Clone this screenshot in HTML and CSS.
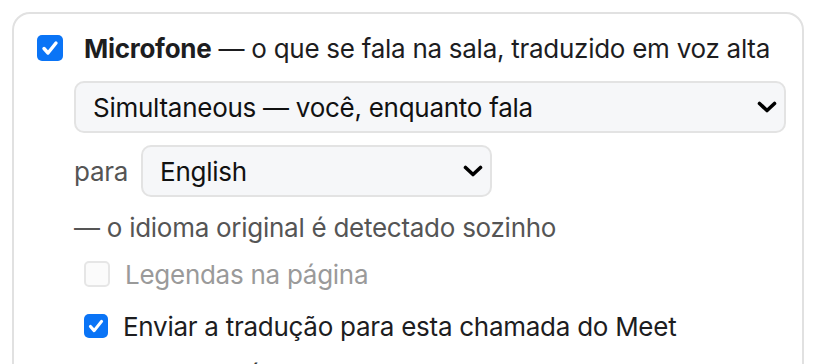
FILE: index.html
```html
<!doctype html>
<html>
<head>
<meta charset="utf-8">
<title>Tradução</title>
<link rel="stylesheet" href="styles.css">
</head>
<body>
<div class="card">
    <label class="mainRow">
        <span class="box on"><svg viewBox="0 0 26 26"><path d="M7 13.5l4 4.5 8-10" /></svg></span>
        <span class="mainTxt"><b>Microfone</b> — o que se fala na sala, traduzido em voz alta</span>
    </label>
    <div class="sub">
        <div class="fakeSelect wide">
            <span>Simultaneous — você, enquanto fala</span>
            <svg class="chev" viewBox="0 0 20 12"><path d="M2.5 2.5l7.5 7 7.5-7" /></svg>
        </div>
        <div class="paraRow">
            <span class="muted">para</span>
            <div class="fakeSelect lang">
                <span>English</span>
                <svg class="chev" viewBox="0 0 20 12"><path d="M2.5 2.5l7.5 7 7.5-7" /></svg>
            </div>
        </div>
        <p class="note">— o idioma original é detectado sozinho</p>
        <label class="optRow disabled">
            <span class="box off"></span>
            <span>Legendas na página</span>
        </label>
        <label class="optRow">
            <span class="box on small"><svg viewBox="0 0 26 26"><path d="M7 13.5l4 4.5 8-10" /></svg></span>
            <span>Enviar a tradução para esta chamada do Meet</span>
        </label>
        <p class="note last">Nível da voz: Áudio traduzido</p>
    </div>
</div>
</body>
</html>
```

FILE: styles.css
```css
*{ margin:0; padding:0; box-sizing:border-box}
body{ background:#fff; font-family:Inter, "Noto Sans", sans-serif; font-size:26px; letter-spacing:-0.27px; color:#1d1d1f; overflow:hidden}
.card{ margin:12px 0 0 12px; width:792px; height:400px; border:2px solid #e1e1e1; border-radius:18px; padding:21px 15px 0 23px}
.mainRow{ display:flex; align-items:center; gap:21px; height:26px}
.mainTxt b{ font-weight:700}
.box{ flex:none; width:26px; height:26px; border-radius:5px; display:flex; align-items:center; justify-content:center}
.box.small{ width:24px; height:24px}
.box.on{ background:#0a74f6}
.box.off{ border:2px solid #e6e6e6; background:#fbfbfb}
.box svg{ width:100%; height:100%}
.box path{ fill:none; stroke:#fff; stroke-width:3.4; stroke-linecap:round; stroke-linejoin:round}
.sub{ margin:20px 0 0 37px}
.fakeSelect{ display:flex; align-items:center; justify-content:space-between; height:52px; border:2px solid #e3e3e3; border-radius:10px; background:#f6f7f9; padding:0 7px 0 17px; color:#111}
.fakeSelect.wide{ width:712px}
.fakeSelect.lang{ width:351px}
.chev{ width:20px; height:12px}
.chev path{ fill:none; stroke:#000; stroke-width:3.6; stroke-linecap:round; stroke-linejoin:round}
.paraRow{ display:flex; align-items:center; gap:13px; margin-top:12px}
.muted{ color:#555}
.note{ color:#555; height:32px; line-height:32px; margin-top:15px}
.optRow{ display:flex; align-items:center; gap:15px; height:32px; margin:14px 0 0 10px}
.optRow + .optRow{ margin-top:20px}
.optRow.disabled{ color:#9a9a9a}
.note.last{ margin-top:20px; padding-left:10px; color:#333}
```
